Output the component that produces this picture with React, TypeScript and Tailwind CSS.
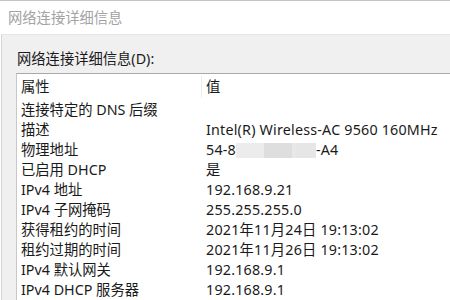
import React from "react";

const rows: [string, string][] = [
  ["连接特定的 DNS 后缀", ""],
  ["描述", "Intel(R) Wireless-AC 9560 160MHz"],
  ["物理地址", "MAC"],
  ["已启用 DHCP", "是"],
  ["IPv4 地址", "192.168.9.21"],
  ["IPv4 子网掩码", "255.255.255.0"],
  ["获得租约的时间", "2021年11月24日 19:13:02"],
  ["租约过期的时间", "2021年11月26日 19:13:02"],
  ["IPv4 默认网关", "192.168.9.1"],
  ["IPv4 DHCP 服务器", "192.168.9.1"],
];

// blurred-out MAC address
const MacValue = () => (
  <span className="flex items-center">
    <span>54-8</span>
    <span className="flex h-[15px]">
      <span className="w-[28px] bg-[#ececec]" />
      <span className="w-[28px] bg-[#dedede]" />
      <span className="w-[4px] bg-[#e8e8e8]" />
      <span className="w-[20px] bg-[#e6e6e6]" />
    </span>
    <span>-A4</span>
  </span>
);

const App = () => {
  return (
    <div className="w-[450px] h-[300px] overflow-hidden bg-white flex flex-col text-[14.3px] text-[#1a1a1a] font-['Noto_Sans','Noto_Sans_CJK_SC',sans-serif]">
      {/* title bar */}
      <div className="h-[34px] shrink-0 border-t border-[#c4c4c4] flex items-center pl-[8px] pt-[1px] text-[#a3a3a3]">
        网络连接详细信息
      </div>

      {/* dialog body */}
      <div className="flex-1 flex flex-col bg-[#f0f0f0] border-t border-[#e6e6e6] border-l border-l-[#d4d4d4] ml-px">
        <div className="h-[38px] shrink-0 flex items-center pl-[15px] pt-[10px]">
          网络连接详细信息(D):
        </div>

        <div className="flex-1 ml-[14px] bg-white border-t border-t-[#a9a9a9] border-l border-l-[#c8c8c8]">
          <div className="h-[26px] flex items-center">
            <div className="w-[184px] pl-[4px]">属性</div>
            <div className="w-px h-[22px] bg-[#ececec]" />
            <div className="pl-[4px]">值</div>
          </div>
          {rows.map(([k, v]) => (
            <div key={k} className="h-[20px] flex items-center whitespace-nowrap">
              <div className="w-[189px] pl-[4px]">{k}</div>
              <div className="tracking-[0.2px]">{v === "MAC" ? <MacValue /> : v}</div>
            </div>
          ))}
        </div>
      </div>
    </div>
  );
};

export default App;
